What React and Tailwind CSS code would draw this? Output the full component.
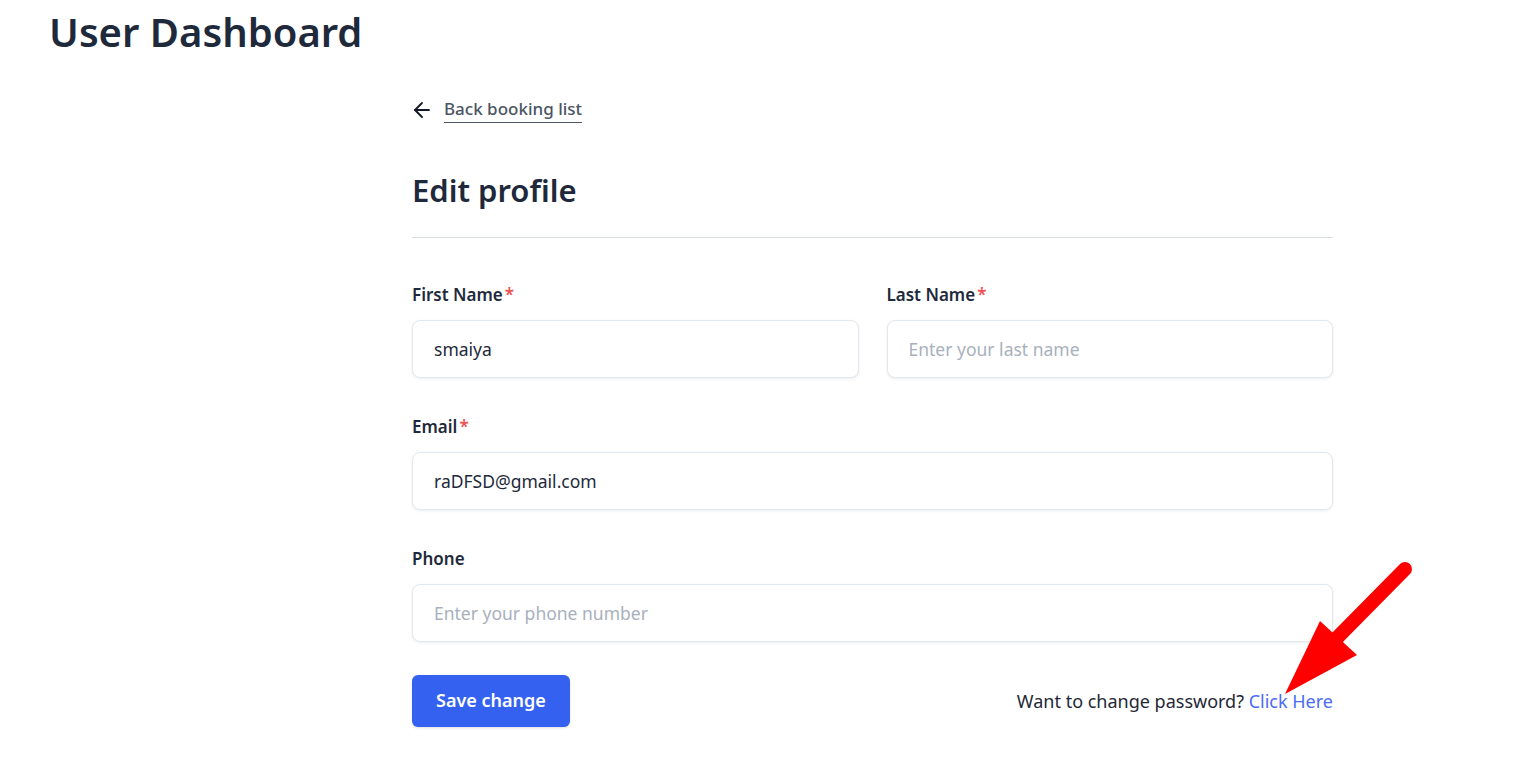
import { ArrowLeft } from 'lucide-react';

function Field({ label, required, placeholder, value }) {
  return (
    <div className="flex flex-col">
      <label className="text-[17px] font-semibold text-[#1e293b] leading-[22px] mb-[14px]">
        {label}
        {required && <span className="text-[#f05252] ml-[2px]">*</span>}
      </label>
      <input
        defaultValue={value}
        placeholder={placeholder}
        className="h-[58px] w-full rounded-lg border border-[#e2e8f0] bg-white px-[21px] text-[17.5px] text-[#1e293b] placeholder:text-[#a8b0bd] shadow-[0_1px_3px_rgba(15,23,42,0.08)] outline-none"
      />
    </div>
  );
}

function App() {
  return (
    <div className="relative min-h-screen bg-white font-['Noto_Sans',sans-serif]">
      <h1 className="pl-[49px] pt-[4px] text-[40px] font-semibold leading-[56px] text-[#1e293b]">User Dashboard</h1>

      <div className="ml-[412px] w-[921px] pt-[36px]">
        <a href="#" className="inline-flex items-center gap-[10px] text-[#4b5563]">
          <ArrowLeft size={24} strokeWidth={1.8} className="text-[#111827] -ml-[2px]" />
          <span className="text-[17px] font-medium border-b border-[#4b5563] leading-[25px] pb-[1px]">Back booking list</span>
        </a>

        <h2 className="mt-[42px] text-[31px] font-semibold text-[#1e293b] leading-[40px]">Edit profile</h2>
        <div className="mt-[27px] border-t border-[#d9dee5]" />

        <form className="pt-[46px] flex flex-col gap-[38px]" onSubmit={(e) => e.preventDefault()}>
          <div className="grid grid-cols-2 gap-[28px]">
            <Field label="First Name" required value="smaiya" />
            <Field label="Last Name" required placeholder="Enter your last name" />
          </div>
          <Field label="Email" required value="raDFSD@gmail.com" />
          <Field label="Phone" placeholder="Enter your phone number" />

          <div className="-mt-[5px] flex items-center justify-between">
            <button type="submit" className="h-[52px] w-[158px] rounded-md bg-[#3461f0] text-[18px] font-semibold text-white shadow-sm">
              Save change
            </button>
            <p className="text-[18px] text-[#1f2937] pt-[2px]">
              Want to change password? <a href="#" className="text-[#4a6cf7]">Click Here</a>
            </p>
          </div>
        </form>
      </div>

      <svg className="absolute left-[1270px] top-[555px] pointer-events-none" width="160" height="150" viewBox="1270 555 160 150">
        <line x1="1405" y1="569" x2="1330" y2="645" stroke="#ff0000" strokeWidth="14" strokeLinecap="round" />
        <polygon points="1320,621 1357,655 1285,694" fill="#ff0000" />
      </svg>
    </div>
  );
}

export default App;
